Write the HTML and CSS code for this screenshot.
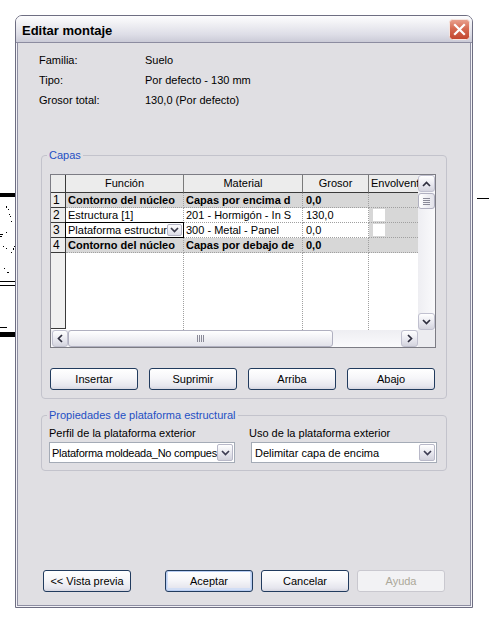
FILE: index.html
```html
<!DOCTYPE html>
<html lang="es">
<head>
<meta charset="utf-8">
<title>Editar montaje</title>
<link rel="stylesheet" href="styles.css">
</head>
<body>
<svg class="canvas" width="493" height="629" viewBox="0 0 493 629" aria-hidden="true">
  <rect x="0" y="193" width="15" height="4" fill="#000"/>
  <rect x="6" y="206" width="1" height="2" fill="#000"/>
  <rect x="8" y="209" width="1" height="1" fill="#000"/>
  <rect x="9" y="214" width="1" height="1" fill="#000"/>
  <rect x="10" y="216" width="1" height="1" fill="#000"/>
  <rect x="11" y="221" width="1" height="1" fill="#000"/>
  <rect x="0" y="234" width="3" height="1" fill="#000"/>
  <rect x="0" y="236" width="2" height="1" fill="#000"/>
  <rect x="6" y="232" width="1" height="1" fill="#000"/>
  <rect x="3" y="246" width="1" height="1" fill="#000"/>
  <rect x="6" y="248" width="1" height="1" fill="#000"/>
  <rect x="11" y="252" width="1" height="1" fill="#000"/>
  <rect x="13" y="248" width="1" height="2" fill="#000"/>
  <rect x="14" y="246" width="1" height="1" fill="#000"/>
  <rect x="4" y="268" width="1" height="1" fill="#000"/>
  <rect x="7" y="272" width="2" height="1" fill="#000"/>
  <rect x="0" y="281" width="15" height="1" fill="#000"/>
  <rect x="0" y="285" width="15" height="1" fill="#000"/>
  <rect x="0" y="327" width="7" height="1" fill="#000"/>
  <rect x="0" y="332" width="15" height="5" fill="#000"/>
  <rect x="477" y="198" width="12" height="1" fill="#000"/>
</svg>

<div class="dialog">
  <div class="titlebar">
    <span class="title">Editar montaje</span>
    <button class="close" type="button" aria-label="Cerrar">
      <svg width="21" height="21" viewBox="0 0 21 21">
        <defs>
          <linearGradient id="cg" x1="0" y1="0" x2="0" y2="1">
            <stop offset="0" stop-color="#eaa390"/>
            <stop offset="0.45" stop-color="#d66b52"/>
            <stop offset="1" stop-color="#c2452d"/>
          </linearGradient>
        </defs>
        <rect x="0.5" y="0.5" width="20" height="20" rx="3" fill="url(#cg)" stroke="#f5e4df"/>
        <path d="M6 6 L15 15 M15 6 L6 15" stroke="#fff" stroke-width="2.2" stroke-linecap="square"/>
      </svg>
    </button>
  </div>

  <div class="client">
    <div class="info">
      <div class="info-row"><span class="info-label">Familia:</span><span>Suelo</span></div>
      <div class="info-row"><span class="info-label">Tipo:</span><span>Por defecto - 130 mm</span></div>
      <div class="info-row"><span class="info-label">Grosor total:</span><span>130,0 (Por defecto)</span></div>
    </div>

    <fieldset class="group capas">
      <legend>Capas</legend>
      <div class="grid">
        <div class="grid-main">
          <div class="sheet">
            <div class="h corner"></div>
            <div class="h">Función</div>
            <div class="h">Material</div>
            <div class="h">Grosor</div>
            <div class="h last">Envolvent</div>

            <div class="rh">1</div>
            <div class="c g b">Contorno del núcleo</div>
            <div class="c g b">Capas por encima d</div>
            <div class="c g b num">0,0</div>
            <div class="c g last"></div>

            <div class="rh">2</div>
            <div class="c">Estructura [1]</div>
            <div class="c">201 - Hormigón - In S</div>
            <div class="c num">130,0</div>
            <div class="c g last"><span class="chk"></span></div>

            <div class="rh">3</div>
            <div class="c sel"><span class="sel-text">Plataforma estructur</span><span class="mini-btn"><svg width="9" height="6" viewBox="0 0 9 6"><path d="M1 1 L4.5 4.5 L8 1" fill="none" stroke="#3c3c4c" stroke-width="1.7"/></svg></span></div>
            <div class="c">300 - Metal - Panel</div>
            <div class="c num">0,0</div>
            <div class="c g last"><span class="chk"></span></div>

            <div class="rh">4</div>
            <div class="c g b">Contorno del núcleo</div>
            <div class="c g b">Capas por debajo de</div>
            <div class="c g b num">0,0</div>
            <div class="c g last"></div>

            <div class="rh fill"></div>
            <div class="f"></div>
            <div class="f"></div>
            <div class="f"></div>
            <div class="f last"></div>
          </div>
          <div class="vbar">
            <span class="sb-btn"><svg width="9" height="6" viewBox="0 0 9 6"><path d="M1 5 L4.5 1.5 L8 5" fill="none" stroke="#2e2e3e" stroke-width="1.7"/></svg></span>
            <span class="vthumb"></span>
            <span class="track"></span>
            <span class="sb-btn"><svg width="9" height="6" viewBox="0 0 9 6"><path d="M1 1 L4.5 4.5 L8 1" fill="none" stroke="#2e2e3e" stroke-width="1.7"/></svg></span>
          </div>
        </div>
        <div class="hbar">
          <span class="sb-btn h-btn"><svg width="6" height="9" viewBox="0 0 6 9"><path d="M5 1 L1.5 4.5 L5 8" fill="none" stroke="#2e2e3e" stroke-width="1.7"/></svg></span>
          <span class="hthumb"></span>
          <span class="track"></span>
          <span class="sb-btn h-btn"><svg width="6" height="9" viewBox="0 0 6 9"><path d="M1 1 L4.5 4.5 L1 8" fill="none" stroke="#2e2e3e" stroke-width="1.7"/></svg></span>
          <span class="corner-box"></span>
        </div>
      </div>
      <div class="grid-buttons">
        <button class="btn" type="button">Insertar</button>
        <button class="btn" type="button">Suprimir</button>
        <button class="btn" type="button">Arriba</button>
        <button class="btn" type="button">Abajo</button>
      </div>
    </fieldset>

    <fieldset class="group props">
      <legend>Propiedades de plataforma estructural</legend>
      <div class="props-cols">
        <div class="prop">
          <div class="prop-label">Perfil de la plataforma exterior</div>
          <div class="combo">
            <span class="combo-text tight">Plataforma moldeada_No compues</span>
            <span class="combo-btn"><svg width="9" height="6" viewBox="0 0 9 6"><path d="M1 1 L4.5 4.5 L8 1" fill="none" stroke="#3c3c52" stroke-width="1.7"/></svg></span>
          </div>
        </div>
        <div class="prop">
          <div class="prop-label second">Uso de la plataforma exterior</div>
          <div class="combo">
            <span class="combo-text">Delimitar capa de encima</span>
            <span class="combo-btn"><svg width="9" height="6" viewBox="0 0 9 6"><path d="M1 1 L4.5 4.5 L8 1" fill="none" stroke="#3c3c52" stroke-width="1.7"/></svg></span>
          </div>
        </div>
      </div>
    </fieldset>

    <div class="footer">
      <button class="btn preview" type="button">&lt;&lt; Vista previa</button>
      <button class="btn default" type="button">Aceptar</button>
      <button class="btn" type="button">Cancelar</button>
      <button class="btn disabled" type="button" disabled>Ayuda</button>
    </div>
  </div>
</div>
</body>
</html>
```

FILE: styles.css
```css
* { box-sizing: border-box; }

html, body { margin: 0; }

body {
  position: relative;
  width: 493px;
  height: 629px;
  overflow: hidden;
  padding: 15px 0 0 15px;
  background: #fff;
  font-family: "Liberation Sans", Arial, sans-serif;
  font-size: 11px;
  color: #000;
}

.canvas { position: absolute; left: 0; top: 0; }

.dialog {
  position: relative;
  width: 458px;
  height: 593px;
  border: 1px solid #6e6e82;
  border-radius: 7px 7px 0 0;
  background: #f3f3f7;
  padding: 0 1px 1px;
  display: flex;
  flex-direction: column;
}

.titlebar {
  height: 27px;
  margin: 0 -1px;
  padding: 0 2px 0 6px;
  display: flex;
  align-items: center;
  justify-content: space-between;
  border-radius: 6px 6px 0 0;
  border-bottom: 1px solid #8c8ca0;
  background: linear-gradient(to bottom, #fdfdfe 0%, #f0f0f4 30%, #dedee7 70%, #cbcbd7 100%);
}

.title {
  font-weight: bold;
  font-size: 13px;
  padding-top: 3px;
}

.close {
  width: 21px;
  height: 21px;
  padding: 0;
  border: 0;
  background: none;
  display: block;
  margin-top: 1px;
}
.close svg { display: block; }

.client {
  flex: 1;
  display: flex;
  flex-direction: column;
  background: #e0dfe3;
  border: 1px solid #8e8ea2;
  border-top: 0;
  padding: 7px 0 13px;
}

.info { padding-left: 21px; }
.info-row { display: flex; height: 20px; line-height: 20px; }
.info-label { width: 106px; }

.group {
  min-width: 0;
  margin: 0 23px;
  border: 1px solid #c3c3cc;
  border-radius: 4px;
}
.group legend {
  padding: 0 2px;
  line-height: 14px;
  font-size: 11px;
  color: #1f4fc4;
}

.capas { margin-top: 38px; padding: 12px 0 8px 8px; }
.capas legend { margin-left: -3px; }

.props { margin-top: 9px; padding: 4px 0 7px 7px; }
.props legend { margin-left: -2px; }

/* grid */
.grid {
  width: 386px;
  height: 174px;
  border: 1px solid #7c7c84;
  background: #fff;
  display: flex;
  flex-direction: column;
}
.grid-main { flex: 1; display: flex; min-height: 0; }

.sheet {
  display: grid;
  grid-template-columns: 15px 118px 119px 66px 49px;
  grid-template-rows: 18px repeat(4, 15px) 1fr;
}

.h {
  background: #ececec;
  border-right: 1px solid #7a7a7a;
  border-bottom: 1px solid #3a3a3a;
  text-align: center;
  line-height: 17px;
  white-space: nowrap;
  overflow: hidden;
  padding: 0 2px;
}
.h.corner { border-right-color: #3a3a3a; }
.h.last { border-right: 0; text-align: left; }

.rh {
  background: #ececec;
  border-right: 1px solid #3a3a3a;
  border-bottom: 1px solid #3a3a3a;
  padding-left: 2px;
  line-height: 14px;
  font-size: 12px;
}
.rh.fill { background: #f0f0f0; margin-bottom: 1px; }

.c {
  border-right: 1px dotted #a0a0a0;
  border-bottom: 1px dotted #a0a0a0;
  padding-left: 2px;
  line-height: 14px;
  white-space: nowrap;
  overflow: hidden;
}
.c.num { padding-left: 3px; }
.c.g { background: #d7d7d7; }
.c.b { font-weight: bold; }
.last { border-right: 0; }

.f { border-right: 1px dotted #a0a0a0; }
.f.last { border-right: 0; }

.chk {
  display: block;
  width: 12px;
  height: 12px;
  margin: 1px 0 0 2px;
  background: #fff;
}

.c.sel {
  margin: -1px 0 0 -1px;
  border: 1px solid #000;
  padding-left: 2px;
  display: flex;
  align-items: center;
  background: #fff;
}
.sel-text { flex: 1; overflow: hidden; white-space: nowrap; }
.mini-btn {
  width: 15px;
  height: 12px;
  margin-right: 1px;
  display: flex;
  align-items: center;
  justify-content: center;
  border: 1px solid #b4b4c4;
  border-radius: 2px;
  background: linear-gradient(#fdfdfe, #dcdce6);
}
.mini-btn svg { display: block; }

/* scrollbars */
.vbar {
  width: 17px;
  display: flex;
  flex-direction: column;
  background: linear-gradient(to right, #eeeef2, #fafafc);
}
.hbar {
  height: 17px;
  display: flex;
  padding-left: 1px;
  background: linear-gradient(to bottom, #eeeef2, #fafafc);
}
.track { flex: 1; }

.sb-btn {
  width: 17px;
  height: 17px;
  flex: none;
  display: flex;
  align-items: center;
  justify-content: center;
  border: 1px solid #c0c0cf;
  border-radius: 3px;
  background: linear-gradient(#ffffff, #e6e6ee 60%, #d4d4de);
}
.sb-btn svg { display: block; }
.h-btn:first-child { width: 16px; }

.vthumb {
  height: 16px;
  margin-top: 1px;
  flex: none;
  border: 1px solid #b0b0c0;
  border-radius: 3px;
  background:
    repeating-linear-gradient(to bottom, #8a8a98 0 1px, transparent 1px 2px) center / 7px 7px no-repeat,
    linear-gradient(to right, #ffffff, #e2e2ea);
}

.hthumb {
  width: 265px;
  flex: none;
  border: 1px solid #b0b0c0;
  border-radius: 3px;
  background:
    repeating-linear-gradient(to right, #8a8a98 0 1px, transparent 1px 2px) center / 7px 7px no-repeat,
    linear-gradient(to bottom, #ffffff, #e2e2ea);
}

.corner-box { width: 17px; flex: none; background: #ececf0; }

/* buttons */
.btn {
  width: 88px;
  height: 22px;
  padding: 0;
  font: inherit;
  color: #000;
  border: 1px solid #213b5e;
  border-radius: 3px;
  background: linear-gradient(to bottom, #ffffff 0%, #f6f6f9 45%, #e6e6ee 85%, #d6d6e0 100%);
}
.btn.default { box-shadow: inset 0 0 0 1px #b8cdf2, inset 0 -1px 0 2px #d2def5; }
.btn.disabled {
  color: #aca899;
  border-color: #c9c8cf;
  background: #f2f2f4;
}

.grid-buttons {
  margin-top: 20px;
  display: flex;
  gap: 11px;
}

.props-cols { display: flex; gap: 16px; }
.prop { width: 186px; }
.prop-label { line-height: 14px; height: 14px; white-space: nowrap; }
.prop-label.second { margin-left: -2px; }

.combo {
  margin-top: 2px;
  height: 21px;
  display: flex;
  align-items: center;
  background: #fff;
  border: 1px solid #a4abb6;
}
.combo-text { flex: 1; min-width: 0; padding-left: 3px; overflow: hidden; white-space: nowrap; }
.combo-text.tight { padding-left: 2px; letter-spacing: -0.25px; }
.combo-btn {
  width: 16px;
  height: 17px;
  flex: none;
  margin-right: 1px;
  display: flex;
  align-items: center;
  justify-content: center;
  border: 1px solid #b8b8c8;
  border-radius: 2px;
  background: linear-gradient(#ffffff, #e4e4ec 60%, #d2d2dc);
}
.combo-btn svg { display: block; }

.footer {
  margin-top: auto;
  padding-left: 25px;
  display: flex;
  gap: 8px;
}
.btn.preview { margin-right: 26px; }
```
